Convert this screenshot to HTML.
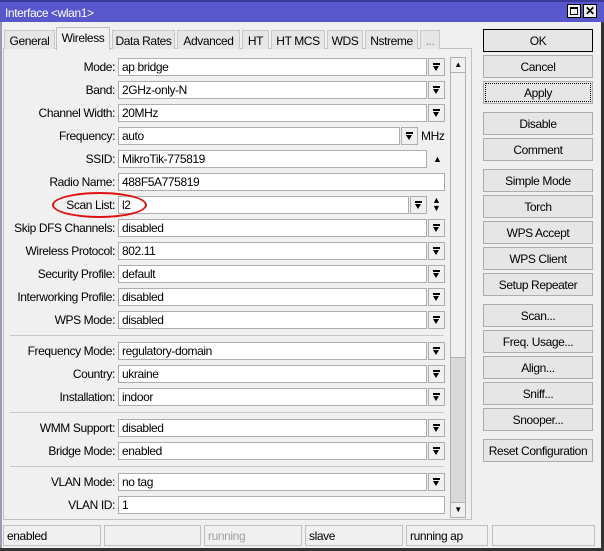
<!DOCTYPE html>
<html><head><meta charset="utf-8"><style>
*{box-sizing:border-box;margin:0;padding:0}
body{width:604px;height:551px;background:#f0f0f0;font-family:"Liberation Sans",sans-serif;font-size:12px;letter-spacing:-0.4px;color:#000;position:relative;overflow:hidden}
.title{position:absolute;left:0;top:0;width:604px;height:22px;background:#5858cc;color:#fff;padding:4px 0 0 5px;font-size:12px;border-top:2px solid #3a3a9a}
.tbtn{position:absolute;top:4px;width:14px;height:14px;background:#f0f0f0;border:1px solid #000}
.a{position:absolute}
.tab{position:absolute;top:30px;height:19px;background:#e6e6e6;border:1px solid #c8c8c8;border-bottom:none;text-align:center;padding-top:3px}
.panel{position:absolute;left:3px;top:48px;width:469px;height:472px;border:1px solid #c0c0c0;background:#f0f0f0}
.lbl{position:absolute;right:489px;text-align:right;white-space:nowrap}
.inp{position:absolute;left:118px;height:18px;background:#fff;border:1px solid #adadad;padding:1px 0 0 3px;white-space:nowrap}
.dd{position:absolute;left:428px;width:17px;height:18px;background:#f0f0f0;border:1px solid #adadad}
.dd::after{content:"";position:absolute;left:4px;top:4px;width:7px;height:2px;background:#000}
.dd::before{content:"";position:absolute;left:4px;top:7px;border-left:3.5px solid transparent;border-right:3.5px solid transparent;border-top:5px solid #000;width:0;height:0}
.sep{position:absolute;left:10px;width:434px;height:1px;background:#c8c8c8}
.btn{position:absolute;left:483px;width:110px;height:23px;background:#e6e6e6;border:1px solid #adadad;text-align:center;padding-top:4px}
.st{position:absolute;top:525px;height:21px;border:1px solid #c0c0c0;padding:3px 0 0 3px}
</style></head><body>
<div class="a" style="left:0;top:0;width:2px;height:551px;background:#9a9ab0"></div>
<div class="a" style="right:0;top:0;width:3px;height:551px;background:#333"></div>
<div class="title">Interface &lt;wlan1&gt;</div>
<div class="tbtn" style="left:567px"><div class="a" style="left:2px;top:2px;width:8px;height:8px;border:1px solid #000;border-top-width:2px"></div></div>
<div class="tbtn" style="left:583px;font-weight:bold;font-size:12px;line-height:12px;text-align:center;letter-spacing:0">✕</div>

<div class="panel"></div>
<div class="tab" style="left:4px;width:51px">General</div>
<div class="tab" style="left:56px;top:27px;height:23px;width:54px;background:#f0f0f0;border-color:#c0c0c0">Wireless</div>
<div class="tab" style="left:112px;width:63px">Data Rates</div>
<div class="tab" style="left:177px;width:63px">Advanced</div>
<div class="tab" style="left:242px;width:27px">HT</div>
<div class="tab" style="left:271px;width:54px">HT MCS</div>
<div class="tab" style="left:327px;width:36px">WDS</div>
<div class="tab" style="left:365px;width:53px">Nstreme</div>
<div class="tab" style="left:420px;width:20px;color:#888">...</div>

<div class="lbl" style="top:60px">Mode:</div><div class="inp" style="top:58px;width:309px">ap bridge</div><div class="dd" style="top:58px"></div>
<div class="lbl" style="top:83px">Band:</div><div class="inp" style="top:81px;width:309px">2GHz-only-N</div><div class="dd" style="top:81px"></div>
<div class="lbl" style="top:106px">Channel Width:</div><div class="inp" style="top:104px;width:309px">20MHz</div><div class="dd" style="top:104px"></div>
<div class="lbl" style="top:129px">Frequency:</div><div class="inp" style="top:127px;width:282px">auto</div><div class="dd" style="top:127px;left:401px"></div><div class="a" style="left:421px;top:129px">MHz</div>
<div class="lbl" style="top:152px">SSID:</div><div class="inp" style="top:150px;width:309px">MikroTik-775819</div><div class="a" style="left:433px;top:154px;font-size:9px">▲</div>
<div class="lbl" style="top:175px">Radio Name:</div><div class="inp" style="top:173px;width:327px">488F5A775819</div>
<div class="lbl" style="top:198px">Scan List:</div><div class="inp" style="top:196px;width:291px">l2</div><div class="dd" style="top:196px;left:410px"></div><div class="a" style="left:432px;top:196px;font-size:9px;line-height:8px">▲<br>▼</div>
<div class="a" style="left:52px;top:192px;width:95px;height:26px;border:2px solid #e01010;border-radius:50%"></div>
<div class="lbl" style="top:221px">Skip DFS Channels:</div><div class="inp" style="top:219px;width:309px">disabled</div><div class="dd" style="top:219px"></div>
<div class="lbl" style="top:244px">Wireless Protocol:</div><div class="inp" style="top:242px;width:309px">802.11</div><div class="dd" style="top:242px"></div>
<div class="lbl" style="top:267px">Security Profile:</div><div class="inp" style="top:265px;width:309px">default</div><div class="dd" style="top:265px"></div>
<div class="lbl" style="top:290px">Interworking Profile:</div><div class="inp" style="top:288px;width:309px">disabled</div><div class="dd" style="top:288px"></div>
<div class="lbl" style="top:313px">WPS Mode:</div><div class="inp" style="top:311px;width:309px">disabled</div><div class="dd" style="top:311px"></div>
<div class="sep" style="top:335px"></div>
<div class="lbl" style="top:344px">Frequency Mode:</div><div class="inp" style="top:342px;width:309px">regulatory-domain</div><div class="dd" style="top:342px"></div>
<div class="lbl" style="top:367px">Country:</div><div class="inp" style="top:365px;width:309px">ukraine</div><div class="dd" style="top:365px"></div>
<div class="lbl" style="top:390px">Installation:</div><div class="inp" style="top:388px;width:309px">indoor</div><div class="dd" style="top:388px"></div>
<div class="sep" style="top:412px"></div>
<div class="lbl" style="top:421px">WMM Support:</div><div class="inp" style="top:419px;width:309px">disabled</div><div class="dd" style="top:419px"></div>
<div class="lbl" style="top:444px">Bridge Mode:</div><div class="inp" style="top:442px;width:309px">enabled</div><div class="dd" style="top:442px"></div>
<div class="sep" style="top:466px"></div>
<div class="lbl" style="top:475px">VLAN Mode:</div><div class="inp" style="top:473px;width:309px">no tag</div><div class="dd" style="top:473px"></div>
<div class="lbl" style="top:498px">VLAN ID:</div><div class="inp" style="top:496px;width:327px">1</div>

<div class="a" style="left:450px;top:57px;width:16px;height:461px;background:#d9d9d9;border:1px solid #b0b0b0"></div>
<div class="a" style="left:451px;top:72px;width:14px;height:286px;background:#f0f0f0;border-top:1px solid #b0b0b0;border-bottom:1px solid #b0b0b0"></div>
<div class="a" style="left:451px;top:58px;width:14px;height:14px;background:#f0f0f0;text-align:center;font-size:8px;line-height:14px">▲</div>
<div class="a" style="left:451px;top:502px;width:14px;height:15px;background:#f0f0f0;border-top:1px solid #b0b0b0;text-align:center;font-size:8px;line-height:14px">▼</div>

<div class="btn" style="top:29px;border-color:#000">OK</div>
<div class="btn" style="top:55px">Cancel</div>
<div class="btn" style="top:81px;outline:1px dotted #000;outline-offset:-3px">Apply</div>
<div class="btn" style="top:112px">Disable</div>
<div class="btn" style="top:138px">Comment</div>
<div class="btn" style="top:169px">Simple Mode</div>
<div class="btn" style="top:195px">Torch</div>
<div class="btn" style="top:221px">WPS Accept</div>
<div class="btn" style="top:247px">WPS Client</div>
<div class="btn" style="top:273px">Setup Repeater</div>
<div class="btn" style="top:304px">Scan...</div>
<div class="btn" style="top:330px">Freq. Usage...</div>
<div class="btn" style="top:356px">Align...</div>
<div class="btn" style="top:382px">Sniff...</div>
<div class="btn" style="top:408px">Snooper...</div>
<div class="btn" style="top:439px">Reset Configuration</div>

<div class="st" style="left:3px;width:98px">enabled</div>
<div class="st" style="left:104px;width:97px"></div>
<div class="st" style="left:204px;width:98px;color:#a0a0a0">running</div>
<div class="st" style="left:305px;width:98px">slave</div>
<div class="st" style="left:406px;width:82px">running ap</div>
<div class="st" style="left:492px;width:103px"></div>
<div class="a" style="left:0;top:548px;width:604px;height:3px;background:#333"></div>
</body></html>
